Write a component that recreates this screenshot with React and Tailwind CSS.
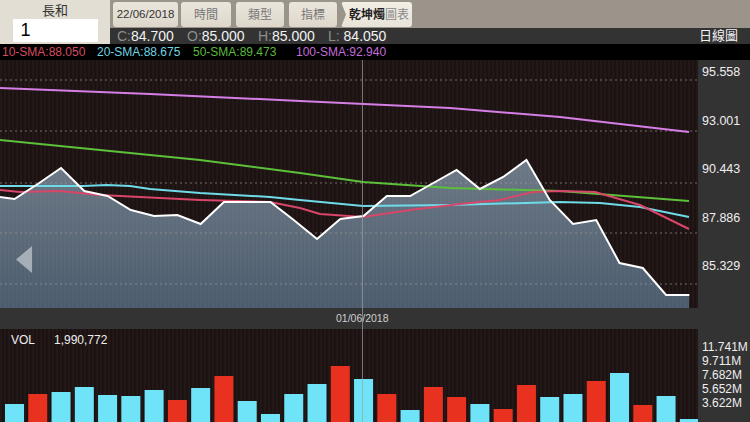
import React from "react";

const PRICE = [199, 184, 168, 191, 196, 210, 216, 215, 224, 202, 202, 202, 220, 239, 219, 216, 196, 196, 183, 170, 189, 177, 160, 200, 224, 220, 263, 268, 295, 295];

const VOL = [
  [404, "c"], [394, "r"], [392, "c"], [387, "c"], [395, "c"], [396, "c"], [390, "c"], [400, "r"], [388, "c"], [376, "r"],
  [401, "c"], [414, "c"], [394, "c"], [384, "c"], [366, "r"], [379, "c"], [394, "r"], [410, "c"], [387, "r"], [397, "r"],
  [404, "c"], [409, "r"], [385, "r"], [397, "c"], [394, "c"], [381, "r"], [373, "c"], [405, "r"], [396, "c"], [419, "c"]
];

const SMA100 = [[0, 88], [150, 94], [300, 101], [450, 108], [560, 117], [689, 132]];
const SMA50 = [[0, 140], [100, 150], [200, 160], [300, 173], [363, 182], [450, 188], [560, 191], [689, 201]];
const SMA20 = [[0, 186], [83, 186], [107, 185], [130, 186], [150, 189], [200, 193], [270, 197], [300, 200], [363, 206], [450, 205], [560, 202], [600, 203], [640, 207], [689, 217]];
const SMA10 = [[0, 190], [20, 192], [60, 191], [100, 195], [200, 200], [270, 202], [300, 208], [320, 214], [363, 217], [410, 210], [460, 204], [500, 200], [533, 192], [560, 191], [595, 192], [640, 205], [689, 229]];

const px = (i) => 14.5 + i * 23.27;
const pts = (arr) => arr.map(([x, y]) => `${x},${y}`).join(" ");
const pricePts = [[0, 197], ...PRICE.map((y, i) => [px(i), y])];
const GRID = [80, 131, 183, 233, 284];

const Btn = ({ className, children }) => (
  <div className={`mt-[2px] h-[25px] rounded-[3px] bg-gradient-to-b from-[#ebe6dc] to-[#ddd7cb] flex items-center justify-center ${className}`}>
    {children}
  </div>
);

const App = () => {
  return (
    <div className="relative w-[750px] h-[422px] overflow-hidden bg-black font-['Liberation_Sans','Noto_Sans_CJK_TC',sans-serif]">
      {/* header */}
      <div className="flex h-[44px]">
        <div className="w-[110px] bg-[#e3ded3] flex flex-col items-center pt-[3px]">
          <span className="text-[13px] leading-[16px] text-[#333]">長和</span>
          <div className="w-[85px] h-[23px] bg-white pl-[8px] text-[18px] leading-[23px] text-black">1</div>
        </div>
        <div className="flex-1 flex flex-col">
          <div className="h-[28px] bg-[#9a948a] flex items-start">
            <Btn className="ml-[3px] w-[65px] text-[11.5px] text-[#333]">22/06/2018</Btn>
            <Btn className="ml-[3px] w-[50px] text-[12px] text-[#777]">時間</Btn>
            <Btn className="ml-[5px] w-[48px] text-[12px] text-[#777]">類型</Btn>
            <Btn className="ml-[5px] w-[48px] text-[12px] text-[#777]">指標</Btn>
            <Btn className="ml-[4px] w-[71px] pl-[5px] text-[12px] [clip-path:polygon(0_0,100%_0,100%_100%,0_100%,5px_50%)] from-[#f3efe7] to-[#e8e3d8]">
              <span className="font-bold text-[#222]">乾坤燭</span>
              <span className="text-[#888]">圖表</span>
            </Btn>
          </div>
          <div className="h-[16px] bg-[#333] flex items-center text-[14px] leading-[16px] text-[#f2f2f2]">
            <span className="ml-[7px] w-[70px]"><span className="text-[#8e8e8e]">C:</span>84.700</span>
            <span className="w-[71px]"><span className="text-[#8e8e8e]">O:</span>85.000</span>
            <span className="w-[70px]"><span className="text-[#8e8e8e]">H:</span>85.000</span>
            <span><span className="text-[#8e8e8e]">L:</span> 84.050</span>
            <span className="ml-auto mr-[12px] text-[13px]">日線圖</span>
          </div>
        </div>
      </div>

      {/* SMA legend */}
      <div className="h-[16px] flex items-center text-[12px] leading-[16px] pl-[2px]">
        <span className="w-[95px] text-[#d84b64]">10-SMA:88.050</span>
        <span className="w-[96px] text-[#6fd3e0]">20-SMA:88.675</span>
        <span className="w-[103px] text-[#5cb83a]">50-SMA:89.473</span>
        <span className="text-[#c36cda]">100-SMA:92.940</span>
      </div>

      {/* price chart */}
      <div className="flex h-[248px]">
        <div className="relative w-[698px]">
          <svg width="698" height="248" viewBox="0 60 698 248" className="block">
            <defs>
              <pattern id="stripes" width="4" height="10" patternUnits="userSpaceOnUse">
                <rect width="2" height="10" fill="#ffffff" fillOpacity="0.025" />
              </pattern>
              <linearGradient id="fill" x1="0" y1="160" x2="0" y2="308" gradientUnits="userSpaceOnUse">
                <stop offset="0" stopColor="#6c7885" />
                <stop offset="1" stopColor="#4b5b6d" />
              </linearGradient>
            </defs>
            <rect x="0" y="60" width="698" height="248" fill="#1d1212" />
            <polygon points={`${pts(pricePts)} 689,308 0,308`} fill="url(#fill)" />
            <rect x="0" y="60" width="698" height="248" fill="url(#stripes)" />
            {GRID.map((y) => (
              <line key={y} x1="0" x2="698" y1={y} y2={y} stroke="#a09a9a" strokeOpacity="0.65" strokeWidth="1" strokeDasharray="2 3" />
            ))}
            <polyline points={pts(SMA100)} fill="none" stroke="#d67ee6" strokeWidth="2" />
            <polyline points={pts(SMA50)} fill="none" stroke="#5cc03a" strokeWidth="2" />
            <polyline points={pts(SMA20)} fill="none" stroke="#6fdbe8" strokeWidth="2" />
            <polyline points={pts(SMA10)} fill="none" stroke="#d8466a" strokeWidth="2" />
            <polyline points={pts(pricePts)} fill="none" stroke="#ffffff" strokeWidth="2" strokeLinejoin="miter" />
          </svg>
          <svg width="16" height="27" viewBox="0 0 16 27" className="absolute left-[16px] top-[186px]">
            <polygon points="16,0 0,13.5 16,27" fill="#b4bbc3" fillOpacity="0.85" />
          </svg>
        </div>
        <div className="w-[52px] bg-[#333] flex flex-col pt-[5px] pl-[4px] text-[12.5px] leading-[14px] text-[#eee]">
          {["95.558", "93.001", "90.443", "87.886", "85.329"].map((v) => (
            <div key={v} className="h-[51px]">{v}</div>
          ))}
        </div>
      </div>

      {/* date row */}
      <div className="relative h-[21px] bg-[#333]">
        <span className="absolute left-[336px] top-[4px] text-[10.5px] leading-[13px] text-[#cfcfcf]">01/06/2018</span>
      </div>

      {/* volume */}
      <div className="flex h-[93px]">
        <div className="relative w-[698px]">
          <svg width="698" height="93" viewBox="0 329 698 93" className="block">
            <rect x="0" y="329" width="698" height="93" fill="#1d1212" />
            <rect x="0" y="329" width="698" height="93" fill="url(#stripes)" />
            {VOL.map(([top, c], i) => (
              <rect key={i} x={5 + i * 23.27} y={top} width="19" height={422 - top} fill={c === "r" ? "#e8321f" : "#6fe4f9"} />
            ))}
          </svg>
          <div className="absolute left-[11px] top-[4px] flex text-[12px] leading-[14px] text-[#eee]">
            <span className="w-[43px]">VOL</span>
            <span>1,990,772</span>
          </div>
        </div>
        <div className="w-[52px] bg-[#333] flex flex-col pt-[11px] pl-[4px] text-[12px] leading-[14px] text-[#eee]">
          <span>11.741M</span>
          <span>9.711M</span>
          <span>7.682M</span>
          <span>5.652M</span>
          <span>3.622M</span>
        </div>
      </div>

      {/* crosshair */}
      <div className="absolute left-[362px] top-[60px] bottom-0 w-px bg-[#a0a0a0]/70" />
    </div>
  );
};

export default App;
